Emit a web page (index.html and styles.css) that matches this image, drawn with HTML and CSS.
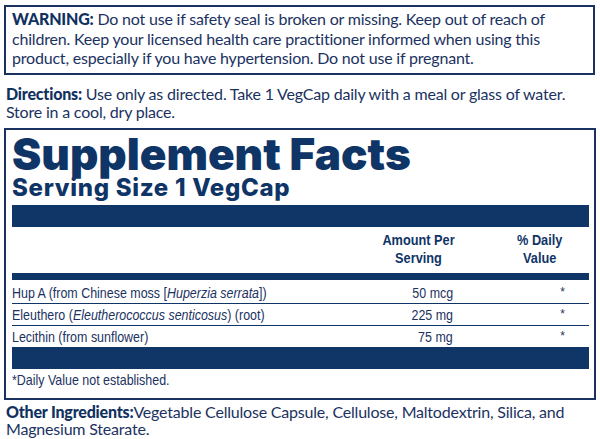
FILE: index.html
```html
<!DOCTYPE html>
<html>
<head>
<meta charset="utf-8">
<link rel="stylesheet" href="styles.css">
</head>
<body>
<div class="page">
  <div class="warning">
    <p><b>WARNING:</b> Do not use if safety seal is broken or missing. Keep out of reach of children. Keep your licensed health care practitioner informed when using this product, especially if you have hypertension. Do not use if pregnant.</p>
  </div>
  <p class="directions"><b>Directions:</b> Use only as directed. Take 1 VegCap daily with a meal or glass of water. Store in a cool, dry place.</p>
  <div class="facts">
    <h1 class="title">Supplement Facts</h1>
    <h2 class="serving">Serving Size 1 VegCap</h2>
    <div class="bar thick"></div>
    <div class="row head">
      <span class="name"></span>
      <span class="amt"><span class="cx">Amount Per<br>Serving</span></span>
      <span class="dv"><span class="cx">% Daily<br>Value</span></span>
    </div>
    <div class="bar thin"></div>
    <div class="row item first">
      <span class="name"><span class="cx">Hup A (from Chinese moss [<i>Huperzia serrata</i>])</span></span>
      <span class="amt"><span class="cx">50 mcg</span></span>
      <span class="dv">*</span>
    </div>
    <div class="row item">
      <span class="name"><span class="cx">Eleuthero (<i>Eleutherococcus senticosus</i>) (root)</span></span>
      <span class="amt"><span class="cx">225 mg</span></span>
      <span class="dv">*</span>
    </div>
    <div class="row item last">
      <span class="name"><span class="cx">Lecithin (from sunflower)</span></span>
      <span class="amt"><span class="cx">75 mg</span></span>
      <span class="dv">*</span>
    </div>
    <div class="bar thick"></div>
    <p class="note"><span class="cx">*Daily Value not established.</span></p>
  </div>
  <p class="other"><b>Other Ingredients:</b>Vegetable Cellulose Capsule, Cellulose, Maltodextrin, Silica, and Magnesium Stearate.</p>
</div>
</body>
</html>
```
FILE: styles.css
```css
* { box-sizing: border-box; }
html, body { margin: 0; padding: 0; background: #fff; }
body {
  width: 600px;
  height: 439px;
  overflow: hidden;
  color: #1b3261;
  font-family: "Lato", "Open Sans", sans-serif;
}
.page { padding: 5px 4px 0 4px; }
p, h1, h2 { margin: 0; }
b { font-weight: 900; color: #11315f; }

.warning {
  width: 591px;
  border: 2px solid #1b3261;
  padding: 2px 6px 5px;
  font-size: 16px;
  letter-spacing: -0.2px;
  line-height: 19.5px;
}
.directions {
  margin-top: 10px;
  padding: 0 2px;
  font-size: 16px;
  letter-spacing: -0.2px;
  line-height: 18px;
}
.facts {
  margin-top: 7px;
  border: 2px solid #1b3261;
  padding: 3px 5px 8px 6px;
  font-family: "Liberation Sans", Arial, sans-serif;
}
.title {
  font-family: "Inter", "Liberation Sans", sans-serif;
  font-size: 44px;
  line-height: 42px;
  font-weight: 900;
  letter-spacing: 0;
  color: #0f3466;
}
.serving {
  font-family: "Inter", "Liberation Sans", sans-serif;
  font-size: 24px;
  line-height: 26px;
  font-weight: 800;
  letter-spacing: 0.7px;
  color: #0f3466;
}
.bar { background: #0f3666; }
.bar.thick { height: 22px; }
.serving + .bar { margin-top: 4px; }
.bar.thin { height: 7px; }

.cx { display: inline-block; transform: scaleX(0.83); white-space: nowrap; }
.row {
  display: grid;
  grid-template-columns: 1fr 100px 129px;
  font-size: 15px;
}
.row .name .cx { transform-origin: left center; }
.row.head {
  font-weight: 700;
  line-height: 18px;
  padding: 4px 0 6px;
  color: #0f3466;
}
.row.head .amt { text-align: center; padding-left: 16px; }
.row.head .dv { text-align: center; padding-left: 31px; }
.row.head .cx { transform-origin: center center; transform: scaleX(0.85); }
.row.item {
  line-height: 21px;
  border-bottom: 1px solid #0f3666;
}
.row.item.first { padding-top: 2px; }
.row.item.last { border-bottom: 0; }
.row.item .amt { text-align: right; padding-right: 7px; }
.row.item .amt .cx { transform-origin: right center; }
.row.item .dv { text-align: right; padding-right: 24px; font-size: 12px; }
.note {
  font-size: 15px;
  line-height: 20px;
  padding-top: 1px;
}
.note .cx { transform-origin: left center; }
.other {
  margin-top: 3px;
  padding: 0 2px;
  font-size: 16px;
  letter-spacing: -0.2px;
  line-height: 17.5px;
}
```
